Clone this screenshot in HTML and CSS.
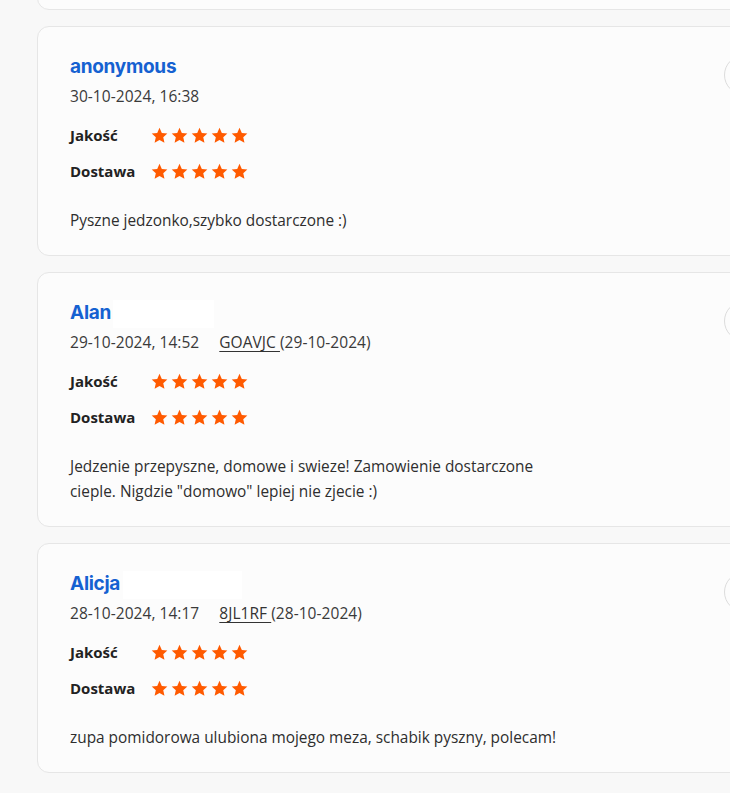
FILE: index.html
```html
<!DOCTYPE html>
<html lang="pl">
<head>
<meta charset="utf-8">
<link rel="stylesheet" href="styles.css">
</head>
<body>
<div class="list">
  <div class="card stub"></div>

  <div class="card">
    <div class="head">
      <div class="who">
        <div class="name">anonymous</div>
        <div class="meta">30-10-2024, 16:38</div>
      </div>
      <div class="circle"></div>
    </div>
    <div class="rates">
      <div class="rate"><span class="label">Jakość</span><span class="stars s5"></span></div>
      <div class="rate"><span class="label">Dostawa</span><span class="stars s5"></span></div>
    </div>
    <p class="text">Pyszne jedzonko,szybko dostarczone :)</p>
  </div>

  <div class="card">
    <div class="head">
      <div class="who">
        <div class="name">Alan<span class="mask m1"></span></div>
        <div class="meta">29-10-2024, 14:52<span class="order"><a class="code" href="#">GOAVJC </a>(29-10-2024)</span></div>
      </div>
      <div class="circle"></div>
    </div>
    <div class="rates">
      <div class="rate"><span class="label">Jakość</span><span class="stars s5"></span></div>
      <div class="rate"><span class="label">Dostawa</span><span class="stars s5"></span></div>
    </div>
    <p class="text">Jedzenie przepyszne, domowe i swieze! Zamowienie dostarczone<br>cieple. Nigdzie "domowo" lepiej nie zjecie :)</p>
  </div>

  <div class="card">
    <div class="head">
      <div class="who">
        <div class="name">Alicja<span class="mask m2"></span></div>
        <div class="meta">28-10-2024, 14:17<span class="order"><a class="code" href="#">8JL1RF </a>(28-10-2024)</span></div>
      </div>
      <div class="circle"></div>
    </div>
    <div class="rates">
      <div class="rate"><span class="label">Jakość</span><span class="stars s5"></span></div>
      <div class="rate"><span class="label">Dostawa</span><span class="stars s5"></span></div>
    </div>
    <p class="text">zupa pomidorowa ulubiona mojego meza, schabik pyszny, polecam!</p>
  </div>
</div>
<script>
  var star = '<svg width="17" height="17" viewBox="0 0 24 24"><path fill="#ff5a00" d="M12 1.2l3.3 7.2 7.8.8-5.8 5.3 1.7 7.7L12 18.3l-6.9 3.9 1.7-7.7L1 9.2l7.8-.8z"/></svg>';
  document.querySelectorAll('.stars.s5').forEach(function (el) {
    el.innerHTML = star + star + star + star + star;
  });
</script>
</body>
</html>
```

FILE: styles.css
```css
html, body {
  margin: 0;
  padding: 0;
}
body {
  background: #f8f8f8;
  overflow: hidden;
  font-family: "Open Sans", "Liberation Sans", sans-serif;
  color: #333;
  width: 730px;
  height: 793px;
}
.list {
  display: flex;
  flex-direction: column;
  gap: 16px;
  padding-left: 37px;
}
.card {
  width: 760px;
  box-sizing: border-box;
  background: #fcfcfc;
  border: 1px solid #e6e6e6;
  border-radius: 12px;
  padding: 28px 32px 22px 32px;
}
.stub {
  height: 40px;
  margin-top: -30px;
  padding: 0;
}
.head {
  display: flex;
  justify-content: space-between;
  align-items: flex-start;
}
.name {
  font-family: "Inter", "Open Sans", sans-serif;
  font-weight: 700;
  font-size: 19px;
  line-height: 24px;
  height: 24px;
  color: #1561d1;
  letter-spacing: -0.3px;
  display: flex;
  align-items: center;
}
.mask {
  display: inline-block;
  background: #ffffff;
  height: 28px;
  margin-top: -2px;
  margin-bottom: -4px;
}
.m1 { width: 101px; margin-left: 2px; }
.m2 { width: 119px; margin-left: 3px; }
.meta {
  margin-top: 7px;
  font-size: 15.5px;
  line-height: 20px;
  color: #3a3a3a;
  letter-spacing: 0.05px;
}
.order {
  margin-left: 20px;
}
.code {
  color: #333;
  text-decoration: underline;
  text-underline-offset: 3px;
}
.circle {
  width: 40px;
  height: 40px;
  box-sizing: border-box;
  border: 1px solid #dcdcdc;
  border-radius: 50%;
  flex: none;
}
.rates {
  margin-top: 17px;
  display: flex;
  flex-direction: column;
  gap: 12px;
}
.rate {
  display: flex;
  align-items: center;
  height: 24px;
}
.label {
  width: 82px;
  font-weight: 700;
  font-size: 15px;
  color: #222;
}
.stars {
  display: flex;
  gap: 3px;
  margin-left: -1px;
}
.stars svg {
  display: block;
}
.text {
  margin: 25px 0 0 0;
  font-size: 15.4px;
  line-height: 25px;
  color: #2e2e2e;
}
```
